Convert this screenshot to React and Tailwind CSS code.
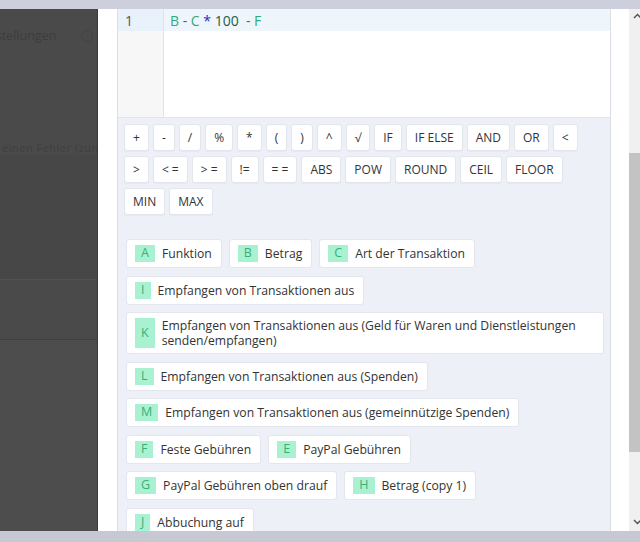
import React from "react";

const ops1 = ["+", "-", "/", "%", "*", "(", ")", "^", "√", "IF", "IF ELSE", "AND", "OR", "<"];
const ops2 = [">", "< =", "> =", "!=", "= =", "ABS", "POW", "ROUND", "CEIL", "FLOOR"];
const ops3 = ["MIN", "MAX"];

const chipRows = [
  [["A", "Funktion"], ["B", "Betrag"], ["C", "Art der Transaktion"]],
  [["I", "Empfangen von Transaktionen aus"]],
  [["K", "Empfangen von Transaktionen aus (Geld für Waren und Dienstleistungen senden/empfangen)", true]],
  [["L", "Empfangen von Transaktionen aus (Spenden)"]],
  [["M", "Empfangen von Transaktionen aus (gemeinnützige Spenden)"]],
  [["F", "Feste Gebühren"], ["E", "PayPal Gebühren"]],
  [["G", "PayPal Gebühren oben drauf"], ["H", "Betrag (copy 1)"]],
  [["J", "Abbuchung auf"]],
];

function OpButton({ label }) {
  return (
    <div className="h-[27px] px-2 flex items-center justify-center bg-white rounded-[3px] border border-[#e4e6ee] text-[12px] text-[#333] whitespace-pre shadow-[0_1px_1px_rgba(0,0,0,0.03)]">
      {label}
    </div>
  );
}

function Chip({ letter, text, full }) {
  return (
    <div
      className={
        "flex items-stretch gap-[7px] py-[5px] pl-[8px] pr-[9px] bg-white rounded-[3px] border border-[#e4e6ee] " +
        (full ? "flex-1 min-w-0" : "")
      }
    >
      <div className="min-h-[17px] px-[6px] flex items-center justify-center bg-[#a9f2d1] text-[#3aae78] text-[12.5px] leading-none">
        {letter}
      </div>
      <div className="self-center text-[12.2px] leading-[15px] text-[#333]">{text}</div>
    </div>
  );
}

function ScrollArrow({ up }) {
  return (
    <svg width="9" height="6" viewBox="0 0 9 6" className="block">
      {up ? (
        <path d="M1 5 L4.5 1.5 L8 5" fill="none" stroke="#505050" strokeWidth="1.4" />
      ) : (
        <path d="M1 1 L4.5 4.5 L8 1" fill="none" stroke="#505050" strokeWidth="1.4" />
      )}
    </svg>
  );
}

export default function App() {
  return (
    <div
      className="w-[640px] h-[542px] overflow-hidden flex flex-col"
      style={{ fontFamily: '"Open Sans", "Noto Sans", sans-serif' }}
    >
      <div className="h-[9px] shrink-0 bg-[#cdd0dc]" />
      <div className="flex h-[522px] shrink-0">
        {/* dimmed page */}
        <div className="w-[98px] shrink-0 bg-[#4a4a4a] overflow-hidden flex flex-col border-r border-[#3a3a3a]">
          <div className="h-[19px] shrink-0" />
          <div className="h-[16px] flex items-center whitespace-nowrap">
            <span className="ml-[-22px] text-[12.5px] text-[#3d3d3d]">Einstellungen</span>
            <span className="ml-auto mr-[4px] w-[12px] h-[12px] rounded-full border border-[#444]" />
          </div>
          <div className="h-[97px] shrink-0" />
          <div className="h-[14px] flex items-center whitespace-nowrap">
            <span className="ml-[2px] text-[11px] tracking-[0.5px] text-[#3f3f3f]">einen Fehler (zum Beispiel</span>
          </div>
          <div className="h-[124px] shrink-0 bg-[#474747]" />
          <div className="h-[60px] shrink-0 border-t border-[#525252] bg-[#4a4a4a]" />
          <div className="flex-1 border-t border-[#3f3f3f] bg-[#4d4d4d]" />
        </div>

        {/* modal */}
        <div className="w-[531px] shrink-0 bg-white pl-[19px] pr-[18px] flex">
          <div className="flex-1 flex flex-col border-x border-[#dcdee5]">
            {/* editor */}
            <div className="h-[108px] shrink-0 flex">
              <div className="w-[46px] shrink-0 bg-[#f7f7f7] border-r border-[#e2e2e2] flex flex-col">
                <div className="h-[22px] bg-[#e9f2fa] flex items-center pl-[7px] text-[14px] text-[#555]">1</div>
              </div>
              <div className="flex-1 flex flex-col">
                <div className="h-[22px] bg-[#eef6fc] flex items-center pl-[6px] text-[14px] whitespace-pre">
                  <span className="text-[#30ad74]">B</span>
                  <span className="text-[#2b7a56]"> - </span>
                  <span className="text-[#30ad74]">C</span>
                  <span className="text-[#2a2ad0]"> * </span>
                  <span className="text-[#1e5c48]">100</span>
                  <span className="text-[#2b7a56]">  - </span>
                  <span className="text-[#30ad74]">F</span>
                </div>
              </div>
            </div>

            {/* functions + variables */}
            <div className="flex-1 bg-[#eef0f8] border-t border-[#e2e4ea] flex flex-col">
              <div className="pt-[6px] pl-[6px] flex flex-col gap-[5px]">
                <div className="flex gap-[4px]">
                  {ops1.map((o) => (
                    <OpButton key={o} label={o} />
                  ))}
                </div>
                <div className="flex gap-[4px]">
                  {ops2.map((o) => (
                    <OpButton key={o} label={o} />
                  ))}
                </div>
                <div className="flex gap-[4px]">
                  {ops3.map((o) => (
                    <OpButton key={o} label={o} />
                  ))}
                </div>
              </div>

              <div className="mt-[24px] pl-[8px] pr-[6px] flex flex-col gap-[7.5px]">
                {chipRows.map((row, i) => (
                  <div key={i} className="flex gap-[7px]">
                    {row.map(([l, t, full]) => (
                      <Chip key={l} letter={l} text={t} full={full} />
                    ))}
                  </div>
                ))}
              </div>
            </div>
          </div>
        </div>

        {/* scrollbar */}
        <div className="w-[11px] shrink-0 overflow-hidden bg-[#f0f0f0]">
          <div className="w-[17px] h-full flex flex-col">
            <div className="h-[144px] shrink-0 flex justify-center pt-[4px]">
              <ScrollArrow up />
            </div>
            <div className="h-[299px] shrink-0 bg-[#c3c3c3]" />
            <div className="flex-1 flex justify-center items-end pb-[6px]">
              <ScrollArrow />
            </div>
          </div>
        </div>
      </div>
      <div className="flex-1 bg-[#c6c9d1]" />
    </div>
  );
}
